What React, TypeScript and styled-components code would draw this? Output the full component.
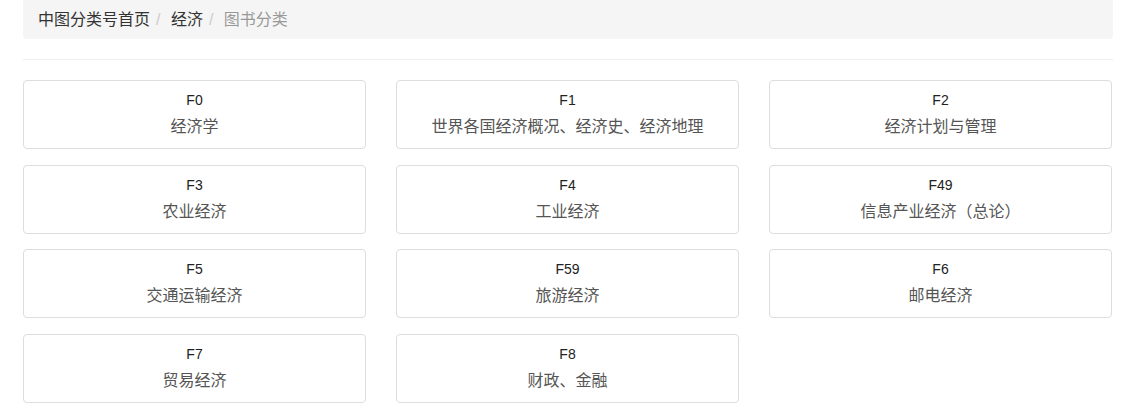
import React from 'react'
import styled, { createGlobalStyle } from 'styled-components'

const GlobalStyle = createGlobalStyle`
  body {
    margin: 0;
    background: #fff;
    font-family: "Liberation Sans", "Noto Sans CJK SC", sans-serif;
    color: #333;
  }
`

const Page = styled.div`
  padding: 0 24px 0 23px;
`

const Breadcrumb = styled.ol`
  list-style: none;
  margin: 0 0 20px;
  padding: 9px 15px 8px;
  height: 39px;
  box-sizing: border-box;
  background: #f5f5f5;
  border-radius: 0 0 4px 4px;
  display: flex;
  align-items: center;
  font-size: 16px;
  line-height: 22px;
`

const Crumb = styled.li<{ $active?: boolean }>`
  color: ${(p) => (p.$active ? '#999' : '#333')};
  &:not(:first-child)::before {
    content: "/\\00a0";
    padding: 0 6px 0 6px;
    color: #ccc;
  }
`

const Rule = styled.hr`
  margin: 0 0 20px;
  border: 0;
  border-top: 1px solid #eee;
`

const Grid = styled.div`
  display: grid;
  grid-template-columns: repeat(3, 343px);
  column-gap: 30px;
  row-gap: 15.6px;
`

const Card = styled.a`
  display: flex;
  flex-direction: column;
  align-items: center;
  height: 69px;
  box-sizing: border-box;
  padding: 9px 10px 9px;
  border: 1px solid #ddd;
  border-radius: 4px;
  text-decoration: none;
  background: #fff;
`

const Code = styled.div`
  font-size: 14px;
  line-height: 20px;
  color: #222;
`

const Name = styled.div`
  margin-top: 5px;
  font-size: 16px;
  line-height: 24px;
  color: #555;
`

const items = [
  ['F0', '经济学'],
  ['F1', '世界各国经济概况、经济史、经济地理'],
  ['F2', '经济计划与管理'],
  ['F3', '农业经济'],
  ['F4', '工业经济'],
  ['F49', '信息产业经济（总论）'],
  ['F5', '交通运输经济'],
  ['F59', '旅游经济'],
  ['F6', '邮电经济'],
  ['F7', '贸易经济'],
  ['F8', '财政、金融'],
]

export default function App() {
  return (
    <Page>
      <GlobalStyle />
      <Breadcrumb>
        <Crumb>中图分类号首页</Crumb>
        <Crumb>经济</Crumb>
        <Crumb $active>图书分类</Crumb>
      </Breadcrumb>
      <Rule />
      <Grid>
        {items.map(([code, name]) => (
          <Card key={code} href="#">
            <Code>{code}</Code>
            <Name>{name}</Name>
          </Card>
        ))}
      </Grid>
    </Page>
  )
}
